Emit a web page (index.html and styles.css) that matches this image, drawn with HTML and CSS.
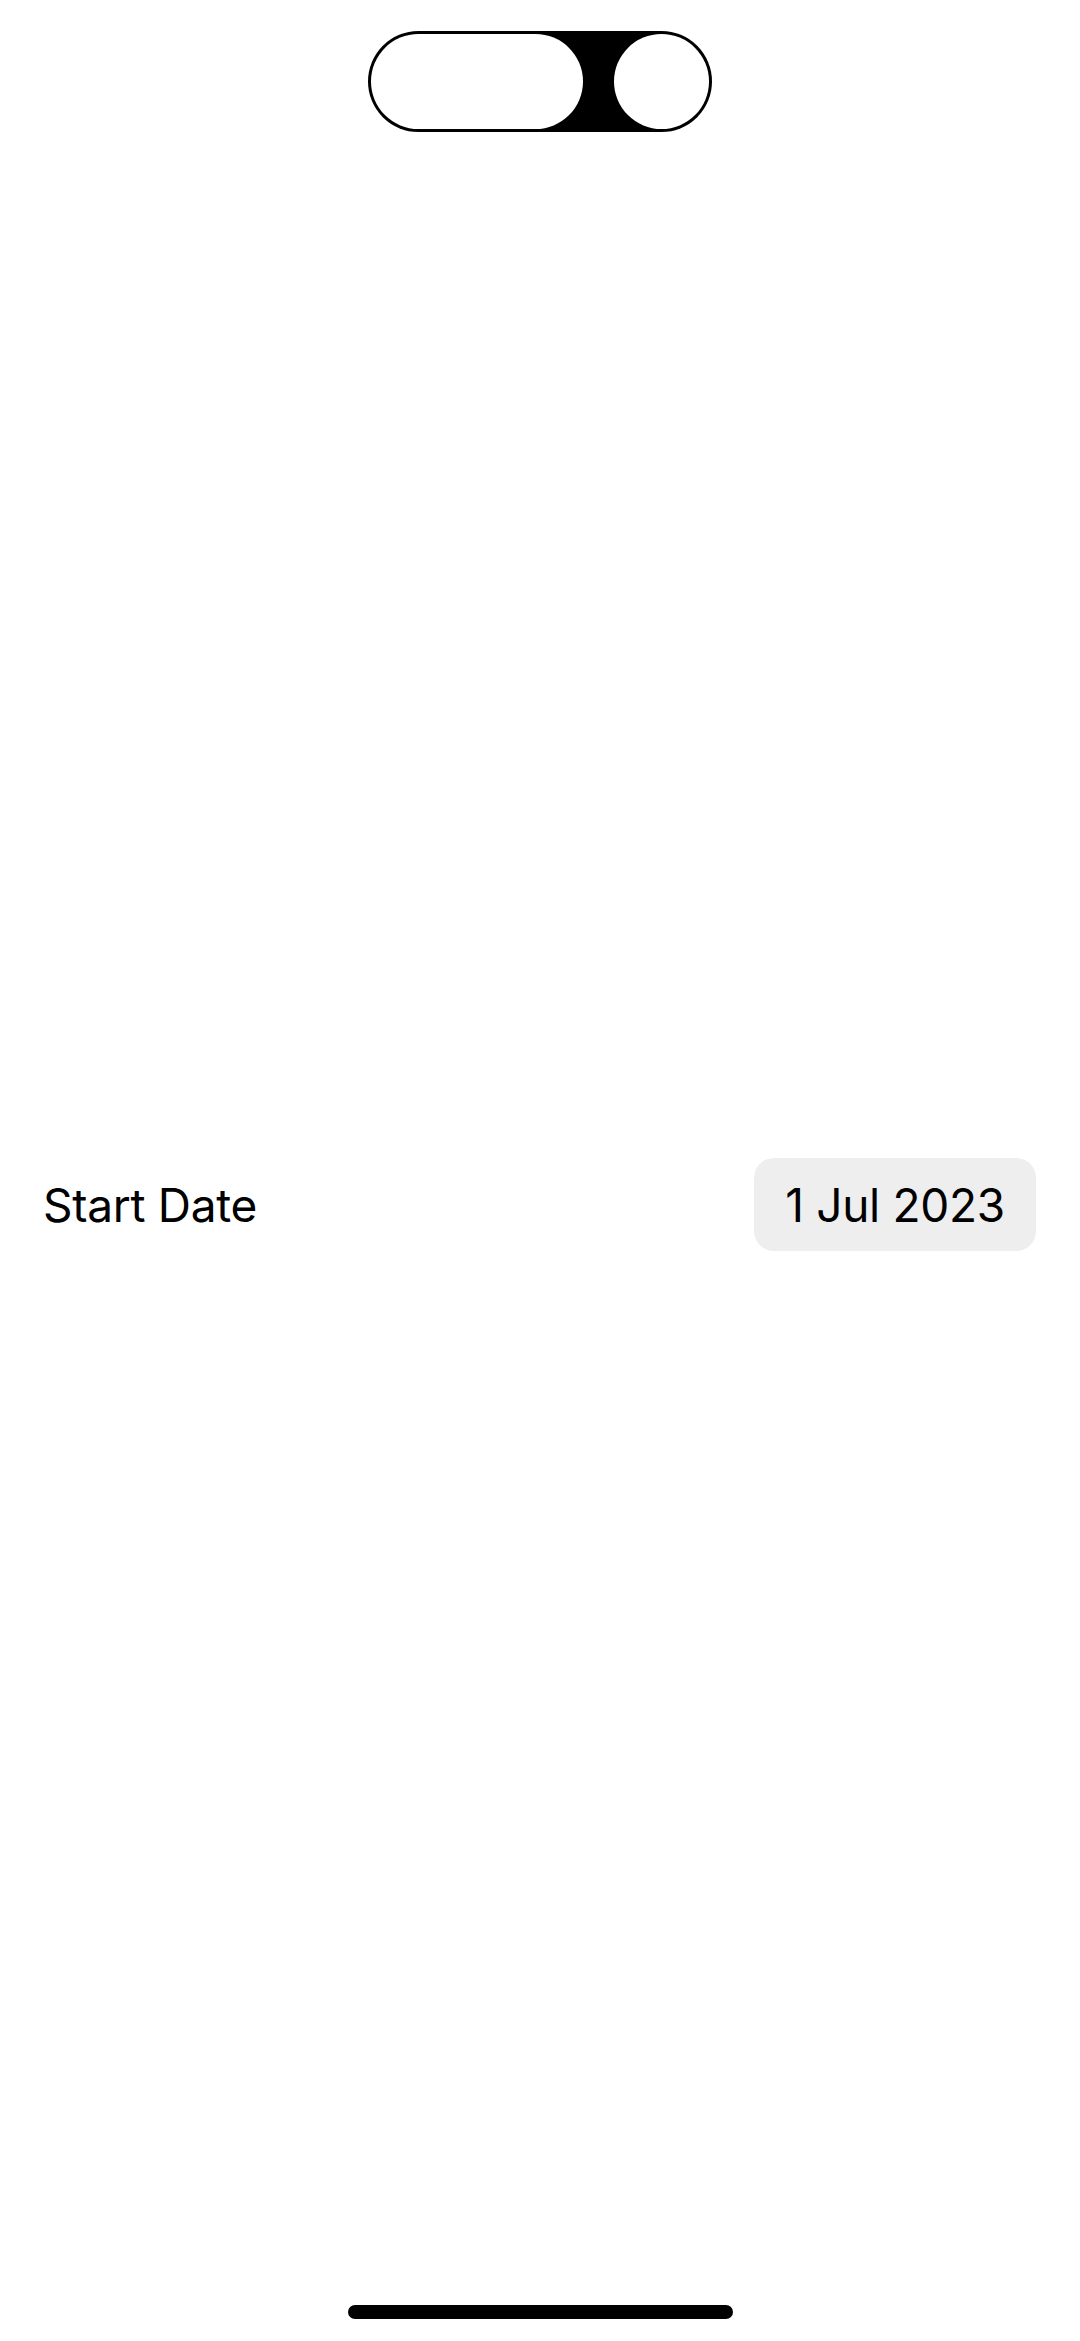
FILE: index.html
```html
<!DOCTYPE html>
<html>
<head>
<meta charset="utf-8">
<link rel="stylesheet" href="styles.css">
</head>
<body>
<div class="screen">
  <div class="top">
    <div class="island">
      <div class="island-pill"></div>
      <div class="island-dot"></div>
    </div>
  </div>
  <div class="row">
    <span class="label">Start Date</span>
    <span class="date">1 Jul 2023</span>
  </div>
  <div class="spacer"></div>
  <div class="home-bar"></div>
</div>
</body>
</html>
```

FILE: styles.css
```css
html, body {
  margin: 0;
  padding: 0;
  background: #ffffff;
}
.screen {
  width: 1080px;
  height: 2341px;
  display: flex;
  flex-direction: column;
  font-family: Inter, "Noto Sans", sans-serif;
  color: #000;
}
.top {
  display: flex;
  justify-content: center;
  padding-top: 31px;
}
.island {
  width: 344px;
  height: 101px;
  box-sizing: border-box;
  padding: 3px;
  background: #000;
  border-radius: 51px;
  display: flex;
  justify-content: space-between;
}
.island-pill {
  width: 212px;
  height: 95px;
  background: #fff;
  border-radius: 48px;
}
.island-dot {
  width: 95px;
  height: 95px;
  background: #fff;
  border-radius: 50%;
}
.row {
  margin-top: 1026px;
  display: flex;
  justify-content: space-between;
  align-items: center;
  padding: 0 44px 0 43px;
}
.label {
  font-size: 46px;
  letter-spacing: -0.3px;
}
.date {
  width: 282px;
  height: 93px;
  box-sizing: border-box;
  display: flex;
  align-items: center;
  justify-content: center;
  background: #eeeeef;
  border-radius: 20px;
  font-size: 46px;
  letter-spacing: -0.3px;
}
.spacer {
  flex: 1;
}
.home-bar {
  align-self: center;
  width: 385px;
  height: 14px;
  border-radius: 7px;
  background: #000;
  margin-bottom: 22px;
}
```
